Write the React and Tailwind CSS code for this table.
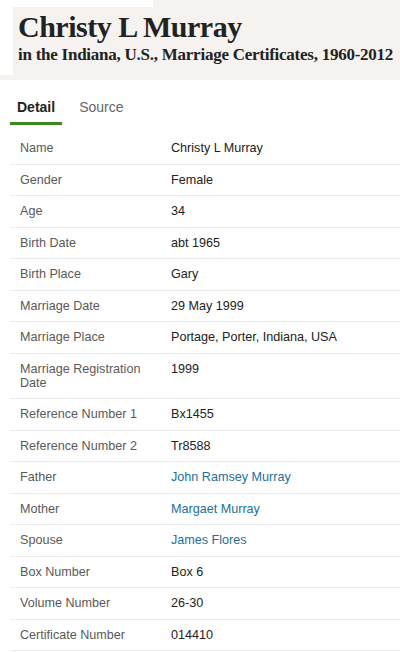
import React from 'react';

const rows = [
  { label: 'Name', value: 'Christy L Murray' },
  { label: 'Gender', value: 'Female' },
  { label: 'Age', value: '34' },
  { label: 'Birth Date', value: 'abt 1965' },
  { label: 'Birth Place', value: 'Gary' },
  { label: 'Marriage Date', value: '29 May 1999' },
  { label: 'Marriage Place', value: 'Portage, Porter, Indiana, USA' },
  { label: 'Marriage Registration Date', value: '1999' },
  { label: 'Reference Number 1', value: 'Bx1455' },
  { label: 'Reference Number 2', value: 'Tr8588' },
  { label: 'Father', value: 'John Ramsey Murray', link: true },
  { label: 'Mother', value: 'Margaet Murray', link: true },
  { label: 'Spouse', value: 'James Flores', link: true },
  { label: 'Box Number', value: 'Box 6' },
  { label: 'Volume Number', value: '26-30' },
  { label: 'Certificate Number', value: '014410' },
];

export default function App() {
  return (
    <div className="w-[400px] h-[652px] overflow-hidden bg-white font-['Liberation_Sans',Arial,sans-serif]">
      {/* Header */}
      <div className="bg-[#f5f2ef] h-[80px] flex flex-col">
        <div className="h-[7px] w-[153px] bg-white shrink-0" />
        <div className="flex h-[68px]">
          <div className="w-[13px] bg-white shrink-0" />
          <div className="pl-[5px] font-['Liberation_Serif','Times_New_Roman',serif] font-bold text-[#222]">
            <h1 className="text-[30px] leading-[36px] tracking-[-0.5px] mt-[2px]">Christy L Murray</h1>
            <p className="text-[17px] leading-[20px] tracking-[-0.25px]">
              in the Indiana, U.S., Marriage Certificates, 1960-2012
            </p>
          </div>
        </div>
      </div>

      {/* Tabs */}
      <div className="flex pl-[10px] mt-[19px]">
        <div className="px-[7px] pb-[7px] border-b-[3px] border-[#3b8a1f] text-[14px] leading-[16px] font-bold text-[#222]">
          Detail
        </div>
        <div className="ml-[10px] px-[7px] pb-[7px] text-[14px] leading-[16px] text-[#666]">Source</div>
      </div>

      {/* Detail table */}
      <div className="ml-[10px] mt-[8px]">
        {rows.map((r) => (
          <div
            key={r.label}
            className="flex items-start border-b border-[#ebebeb] pl-[10px] py-[8.25px] text-[12.6px] leading-[14px]"
          >
            <div className="w-[151px] shrink-0 pr-[10px] text-[#595959]">{r.label}</div>
            <div className={r.link ? 'text-[#1a6fa0]' : 'text-[#222]'}>{r.value}</div>
          </div>
        ))}
      </div>
    </div>
  );
}
